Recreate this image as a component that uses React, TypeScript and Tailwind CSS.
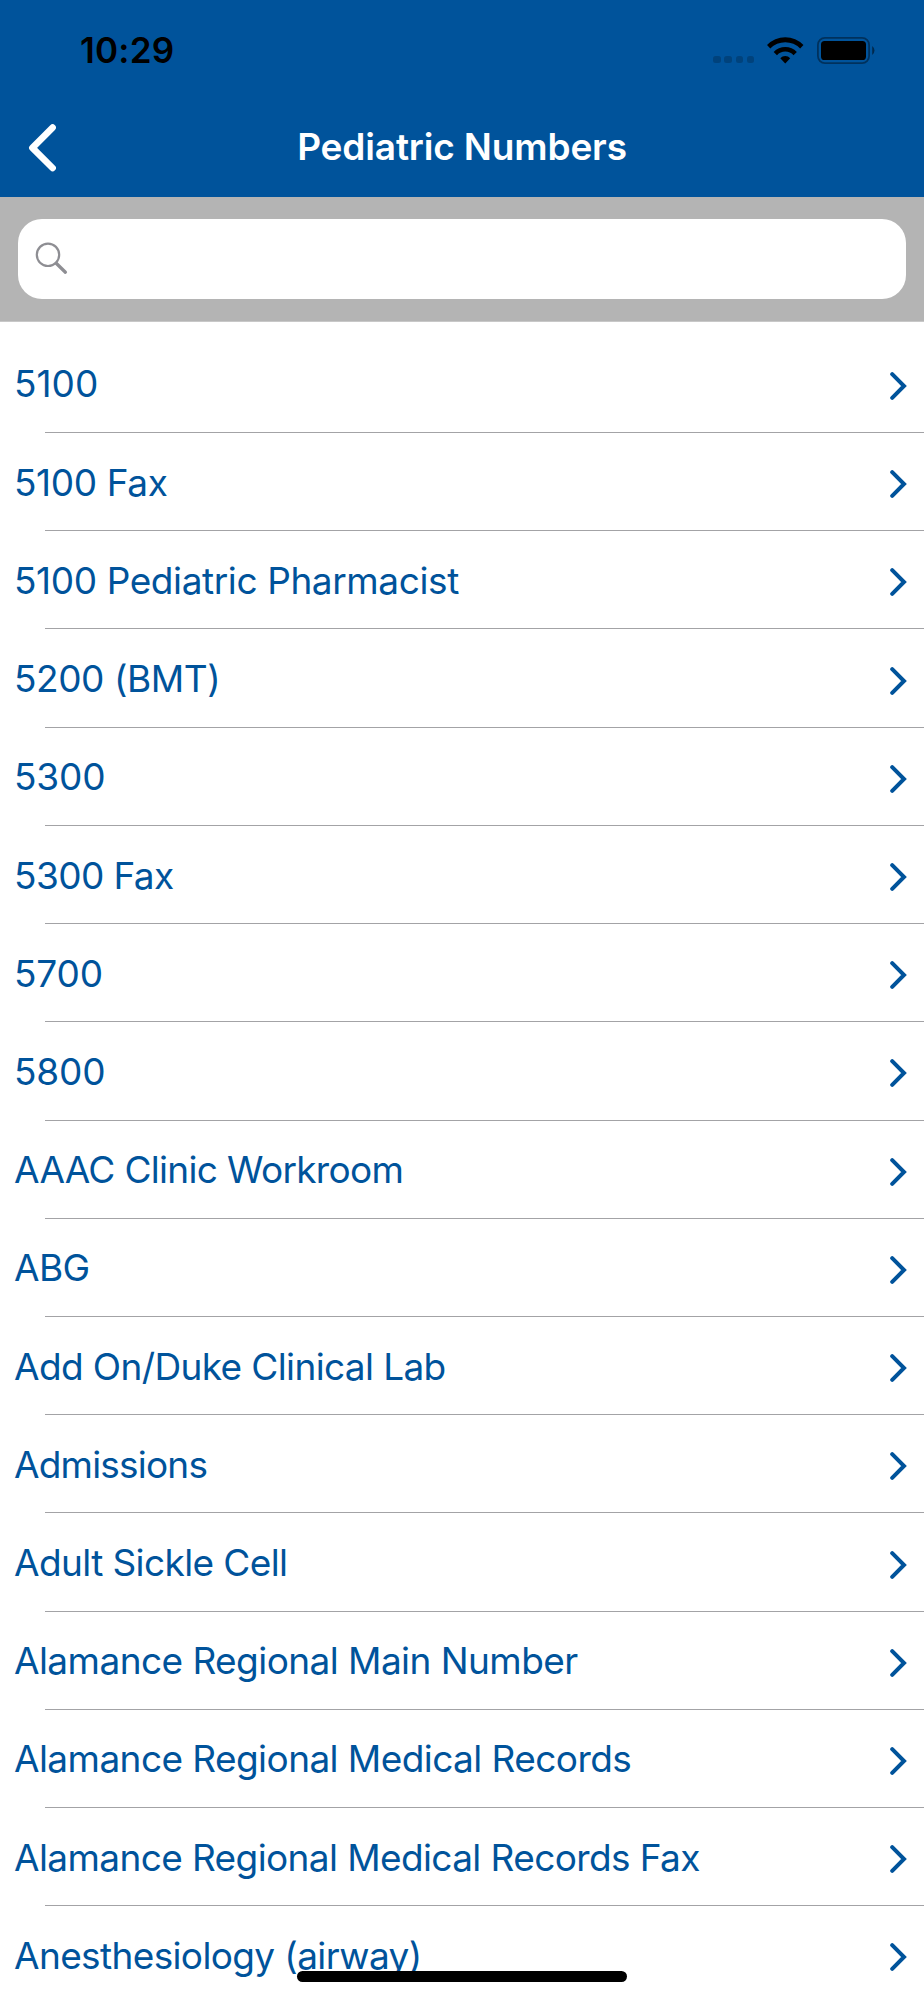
import React from "react";

const entries = [
  { name: "5100", tracking: "tracking-[0px]" },
  { name: "5100 Fax", tracking: "tracking-[-0.38px]" },
  { name: "5100 Pediatric Pharmacist", tracking: "tracking-[-0.4px]" },
  { name: "5200 (BMT)", tracking: "tracking-[-0.43px]" },
  { name: "5300", tracking: "tracking-[-0.15px]" },
  { name: "5300 Fax", tracking: "tracking-[-0.6px]" },
  { name: "5700", tracking: "tracking-[-0.15px]" },
  { name: "5800", tracking: "tracking-[-0.15px]" },
  { name: "AAAC Clinic Workroom", tracking: "tracking-[-0.68px]" },
  { name: "ABG", tracking: "tracking-[-0.6px]" },
  { name: "Add On/Duke Clinical Lab", tracking: "tracking-[-0.62px]" },
  { name: "Admissions", tracking: "tracking-[-0.8px]" },
  { name: "Adult Sickle Cell", tracking: "tracking-[-0.6px]" },
  { name: "Alamance Regional Main Number", tracking: "tracking-[-0.56px]" },
  { name: "Alamance Regional Medical Records", tracking: "tracking-[-0.57px]" },
  { name: "Alamance Regional Medical Records Fax", tracking: "tracking-[-0.61px]" },
  { name: "Anesthesiology (airway)", tracking: "tracking-[-0.63px]" },
];

function WifiIcon() {
  return (
    <svg viewBox="0 0 110 80" className="h-[26.5px] w-[36.5px]">
      <path d="M0 24A76 76 0 0 1 110 24L100 35A62 62 0 0 0 10 35Z" />
      <path d="M20 45A48 48 0 0 1 90 45L80 55A34 34 0 0 0 30 55Z" />
      <path d="M40 64A21 21 0 0 1 70 64L55 80Z" />
    </svg>
  );
}

function BatteryIcon() {
  return (
    <svg viewBox="0 0 59 27" className="h-[27px] w-[59px]">
      <rect x="0.9" y="0.9" width="51.2" height="25.2" rx="7" fill="none" stroke="#000" strokeOpacity="0.4" strokeWidth="1.8" />
      <rect x="4" y="4" width="45" height="19" rx="3.6" />
      <path d="M55.2 9A5.6 5.6 0 0 1 55.2 18Z" fillOpacity="0.5" />
    </svg>
  );
}

function StatusBar() {
  return (
    <div className="flex h-[100px] items-start justify-between pl-20 pr-12">
      <span className="mt-7 text-[35px] leading-[44px] font-semibold tracking-[0.2px] text-black">10:29</span>
      <div className="mt-[37px] flex h-[27px] items-start">
        <div className="mt-[19px] mr-[13px] flex gap-[3.7px]">
          {[0, 1, 2, 3].map((dot) => (
            <span key={dot} className="size-[7.4px] rounded-[2.5px] bg-black/20" />
          ))}
        </div>
        <WifiIcon />
        <div className="ml-[13.5px]">
          <BatteryIcon />
        </div>
      </div>
    </div>
  );
}

function NavBar() {
  return (
    <div className="grid h-[97px] grid-cols-[100px_1fr_100px] items-start">
      <button className="mt-6 ml-[28px] w-7" aria-label="Back">
        <svg viewBox="0 0 28 48" className="h-12 w-7" fill="none" stroke="#fff" strokeWidth="6.6" strokeLinecap="round" strokeLinejoin="round">
          <path d="M24.6 3.6L4.4 23.8L24.6 44" />
        </svg>
      </button>
      <h1 className="mt-6 text-center text-[37px] leading-[46px] font-semibold tracking-[-0.15px] whitespace-nowrap text-white">
        Pediatric Numbers
      </h1>
    </div>
  );
}

function SearchBar() {
  return (
    <div className="h-[125px] border-b border-[#c8c8c8] bg-[#b4b4b4] px-[18px] pt-[22px]">
      <div className="flex h-20 items-start rounded-[24px] bg-white pt-[23px] pl-[17px]">
        <svg viewBox="0 0 34 34" className="size-[34px]" fill="none" stroke="#8e8e93" strokeLinecap="round">
          <circle cx="13" cy="12.8" r="11.2" strokeWidth="2.2" />
          <path d="M21.2 21.2L30.4 30.2" strokeWidth="3.3" />
        </svg>
      </div>
    </div>
  );
}

function Row({ name, tracking }: { name: string; tracking: string }) {
  return (
    <li className="flex h-[98.22px] shrink-0 flex-col">
      <div className="flex flex-1 items-center justify-between pr-[17px] pl-[14px]">
        <span className={`pt-[2px] text-[37px] leading-[46px] whitespace-nowrap ${tracking}`}>{name}</span>
        <svg viewBox="0 0 18 28" className="mt-[5px] h-7 w-[18px]" fill="none" stroke="currentColor" strokeWidth="4" strokeLinecap="round">
          <path d="M3.2 2.2L15 14L3.2 25.8" />
        </svg>
      </div>
      <div className="ml-[45px] h-px bg-[#a3a3a6]" />
    </li>
  );
}

export default function App() {
  return (
    <div className="relative flex h-[2000px] w-[924px] flex-col overflow-hidden bg-white font-['Inter',sans-serif]">
      <header className="shrink-0 bg-[#00539b]">
        <StatusBar />
        <NavBar />
      </header>
      <SearchBar />
      <ul className="flex min-h-0 flex-1 flex-col overflow-hidden pt-[12.8px] text-[#00539b]">
        {entries.map((entry) => (
          <Row key={entry.name} {...entry} />
        ))}
      </ul>
      {/* Home indicator */}
      <div className="absolute bottom-[18px] left-[297px] h-[11px] w-[330px] rounded-full bg-black" />
    </div>
  );
}
